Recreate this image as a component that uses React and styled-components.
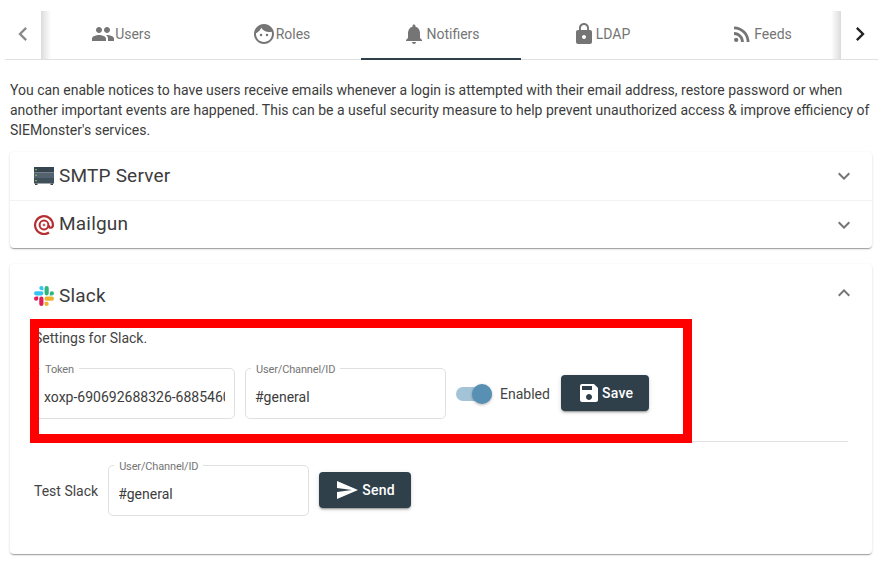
import React from "react";
import styled, { createGlobalStyle } from "styled-components";
import {
  MdPeople,
  MdFace,
  MdNotifications,
  MdLock,
  MdRssFeed,
  MdSave,
  MdSend,
  MdExpandMore,
  MdChevronLeft,
  MdChevronRight
} from "react-icons/md";

const tabs = [
  { label: "Users", icon: MdPeople },
  { label: "Roles", icon: MdFace },
  { label: "Notifiers", icon: MdNotifications, active: true },
  { label: "LDAP", icon: MdLock },
  { label: "Feeds", icon: MdRssFeed }
];

const ServerIcon = () => (
  <svg width="20" height="20" viewBox="0 0 20 20">
    <rect x="0" y="1" width="20" height="5.5" fill="#36454f" />
    <rect x="0" y="6.5" width="20" height="5.5" fill="#52636f" />
    <rect x="0" y="12" width="20" height="5.5" fill="#3f505b" />
    <rect x="1" y="3.2" width="2" height="1" fill="#8bc34a" />
    <rect x="1" y="8.7" width="2" height="1" fill="#8bc34a" />
    <rect x="1" y="14.2" width="2" height="1" fill="#8bc34a" />
    <rect x="1" y="17.5" width="2.5" height="1.5" fill="#36454f" />
    <rect x="16.5" y="17.5" width="2.5" height="1.5" fill="#36454f" />
  </svg>
);

const MailgunIcon = () => (
  <svg width="20" height="20" viewBox="0 0 20 20" fill="none" stroke="#b52e31">
    <path d="M15 17.5A8.9 8.9 0 1 1 18.9 10c0 1.7-.9 2.7-2.1 2.7s-2.1-1-2.1-2.3V10" strokeWidth="2.2" />
    <circle cx="10" cy="10" r="4.4" strokeWidth="2" />
    <circle cx="10" cy="10" r="0.9" strokeWidth="1" />
  </svg>
);

const SlackIcon = () => (
  <svg width="20" height="20" viewBox="0 0 24 24">
    <path
      fill="#E01E5A"
      d="M5.042 15.165a2.528 2.528 0 0 1-2.52 2.523A2.528 2.528 0 0 1 0 15.165a2.527 2.527 0 0 1 2.522-2.52h2.52v2.52zM6.313 15.165a2.527 2.527 0 0 1 2.521-2.52 2.527 2.527 0 0 1 2.521 2.52v6.313A2.528 2.528 0 0 1 8.834 24a2.528 2.528 0 0 1-2.521-2.522v-6.313z"
    />
    <path
      fill="#36C5F0"
      d="M8.834 5.042a2.528 2.528 0 0 1-2.521-2.52A2.528 2.528 0 0 1 8.834 0a2.528 2.528 0 0 1 2.521 2.522v2.52H8.834zM8.834 6.313a2.528 2.528 0 0 1 2.521 2.521 2.528 2.528 0 0 1-2.521 2.521H2.522A2.528 2.528 0 0 1 0 8.834a2.528 2.528 0 0 1 2.522-2.521h6.312z"
    />
    <path
      fill="#2EB67D"
      d="M18.956 8.834a2.528 2.528 0 0 1 2.522-2.521A2.528 2.528 0 0 1 24 8.834a2.528 2.528 0 0 1-2.522 2.521h-2.522V8.834zM17.688 8.834a2.528 2.528 0 0 1-2.523 2.521 2.527 2.527 0 0 1-2.52-2.521V2.522A2.527 2.527 0 0 1 15.165 0a2.528 2.528 0 0 1 2.523 2.522v6.312z"
    />
    <path
      fill="#ECB22E"
      d="M15.165 18.956a2.528 2.528 0 0 1 2.523 2.522A2.528 2.528 0 0 1 15.165 24a2.527 2.527 0 0 1-2.52-2.522v-2.522h2.52zM15.165 17.688a2.527 2.527 0 0 1-2.52-2.523 2.526 2.526 0 0 1 2.52-2.52h6.313A2.527 2.527 0 0 1 24 15.165a2.528 2.528 0 0 1-2.522 2.523h-6.313z"
    />
  </svg>
);

const Field = ({ label, value }) => (
  <FieldBox>
    <FieldLabel>{label}</FieldLabel>
    <FieldInput type="text" defaultValue={value} />
  </FieldBox>
);

export default function App() {
  return (
    <Page>
      <GlobalStyle />
      <TabBar>
        <ScrollButton>
          <MdChevronLeft size={28} color="#8a8a8a" />
        </ScrollButton>
        <TabStrip>
          {tabs.map(({ label, icon: Icon, active }) => (
            <Tab key={label} $active={active}>
              <Icon size={24} color="#757575" />
              {label}
            </Tab>
          ))}
        </TabStrip>
        <ScrollButton>
          <MdChevronRight size={28} color="#222" />
        </ScrollButton>
      </TabBar>

      <Intro>
        You can enable notices to have users receive emails whenever a login is
        attempted with their email address, restore password or when another
        important events are happened. This can be a useful security measure to
        help prevent unauthorized access &amp; improve efficiency of
        SIEMonster's services.
      </Intro>

      <Card>
        <AccordionHeader>
          <HeaderTitle>
            <ServerIcon />
            <TitleText>SMTP Server</TitleText>
          </HeaderTitle>
          <ExpandIcon>
            <MdExpandMore size={24} color="#757575" />
          </ExpandIcon>
        </AccordionHeader>
        <AccordionHeader $divided>
          <HeaderTitle>
            <MailgunIcon />
            <TitleText>Mailgun</TitleText>
          </HeaderTitle>
          <ExpandIcon>
            <MdExpandMore size={24} color="#757575" />
          </ExpandIcon>
        </AccordionHeader>
      </Card>

      <SlackCard>
        <AccordionHeader $expanded>
          <HeaderTitle>
            <SlackIcon />
            <TitleText>Slack</TitleText>
          </HeaderTitle>
          <ExpandIcon $open>
            <MdExpandMore size={24} color="#757575" />
          </ExpandIcon>
        </AccordionHeader>
        <Details>
          <Note>Settings for Slack.</Note>
          <FormRow>
            <Field label="Token" value="xoxp-690692688326-688546053" />
            <Field label="User/Channel/ID" value="#general" />
            <SwitchLabel>
              <SwitchTrack>
                <SwitchThumb />
              </SwitchTrack>
              Enabled
            </SwitchLabel>
            <ActionButton $gap={1}>
              <MdSave size={24} />
              Save
            </ActionButton>
          </FormRow>
          <Divider />
          <TestRow>
            <TestLabel>Test Slack</TestLabel>
            <Field label="User/Channel/ID" value="#general" />
            <ActionButton $gap={3}>
              <MdSend size={24} />
              Send
            </ActionButton>
          </TestRow>
        </Details>
        <Highlight />
      </SlackCard>
    </Page>
  );
}

const GlobalStyle = createGlobalStyle`
  html, body {
    margin: 0;
    background: #fff;
    font-family: Roboto, "Liberation Sans", sans-serif;
  }
`;

const Page = styled.div`
  width: 883px;
  height: 561px;
  overflow: hidden;
  padding: 11px 11px 0 10px;
  box-sizing: border-box;
  color: #333;
`;

const TabBar = styled.div`
  display: flex;
  height: 49px;
  margin: 0 -6px 0 -5px;
  border-bottom: 1px solid #e0e0e0;
  box-sizing: border-box;
`;

const ScrollButton = styled.div`
  width: 36px;
  flex: none;
  display: flex;
  align-items: center;
  justify-content: center;
  padding-bottom: 3px;
  box-sizing: border-box;
  &:last-child {
    width: 37px;
  }
`;

const TabStrip = styled.div`
  display: flex;
  width: 800px;
  background:
    linear-gradient(to right, rgba(0, 0, 0, 0.14), rgba(0, 0, 0, 0) 10px),
    linear-gradient(to left, rgba(0, 0, 0, 0.14), rgba(0, 0, 0, 0) 10px);
`;

const Tab = styled.div`
  width: 160px;
  height: 49px;
  display: flex;
  align-items: center;
  justify-content: center;
  box-sizing: border-box;
  padding-bottom: 2px;
  font-size: 14px;
  color: #757575;
  border-bottom: 2px solid ${props => (props.$active ? "#2f404b" : "transparent")};
`;

const Intro = styled.p`
  margin: 20px -6px 12px 0;
  font-size: 14px;
  line-height: 20px;
  color: #3c3c3c;
`;

const Card = styled.section`
  background: #fff;
  border-radius: 4px;
  box-shadow: 0 2px 1px -1px rgba(0, 0, 0, 0.2), 0 1px 1px 0 rgba(0, 0, 0, 0.14),
    0 1px 3px 0 rgba(0, 0, 0, 0.12);
`;

const SlackCard = styled(Card)`
  position: relative;
  margin-top: 16px;
`;

const AccordionHeader = styled.div`
  height: ${props => (props.$expanded ? "64px" : "48px")};
  display: flex;
  align-items: center;
  justify-content: space-between;
  padding: 0 16px 0 24px;
  box-sizing: border-box;
  border-top: ${props => (props.$divided ? "1px solid #f2f2f2" : "none")};
`;

const HeaderTitle = styled.div`
  display: flex;
  align-items: center;
  gap: 5px;
  font-size: 19px;
  letter-spacing: 0.2px;
  color: #3c3c3c;
`;

const TitleText = styled.span`
  margin-bottom: 2px;
`;

const ExpandIcon = styled.span`
  display: flex;
  transform: ${props => (props.$open ? "rotate(180deg)" : "none")} translateY(3px);
`;

const Details = styled.div`
  padding: 0 24px 38px;
`;

const Note = styled.div`
  font-size: 14px;
  line-height: 20px;
  margin-bottom: 20px;
  color: #444;
`;

const FormRow = styled.div`
  display: flex;
  align-items: center;
  gap: 10px;
`;

const TestRow = styled(FormRow)`
  margin-top: 23px;
`;

const FieldBox = styled.div`
  position: relative;
  width: 201px;
  height: 51px;
  flex: none;
  border: 1px solid #e0e0e0;
  border-radius: 5px;
  box-sizing: border-box;
`;

const FieldLabel = styled.label`
  position: absolute;
  top: -6px;
  left: 5px;
  padding: 0 5px;
  background: #fff;
  font-size: 11px;
  line-height: 13px;
  letter-spacing: -0.15px;
  color: #757575;
`;

const FieldInput = styled.input`
  width: 100%;
  height: 100%;
  padding: 7px 9px 0;
  border: 0;
  outline: 0;
  background: transparent;
  box-sizing: border-box;
  font-family: inherit;
  font-size: 14px;
  color: #3c3c3c;
`;

const SwitchLabel = styled.div`
  display: flex;
  align-items: center;
  gap: 8px;
  margin-right: 1px;
  font-size: 14px;
  color: #444;
`;

const SwitchTrack = styled.div`
  position: relative;
  width: 36px;
  height: 14px;
  border-radius: 7px;
  background: #a3c3d7;
`;

const SwitchThumb = styled.div`
  position: absolute;
  top: -3px;
  right: 0;
  width: 20px;
  height: 20px;
  border-radius: 50%;
  background: #5790b3;
  box-shadow: 0 1px 3px rgba(0, 0, 0, 0.3);
`;

const ActionButton = styled.button`
  height: 36px;
  margin-top: -2px;
  display: flex;
  align-items: center;
  gap: ${props => props.$gap || 0}px;
  padding: 0 16px;
  border: 0;
  border-radius: 4px;
  background: #2f404b;
  color: #fff;
  font-family: inherit;
  font-size: 14px;
  font-weight: 500;
  letter-spacing: 0.3px;
  box-shadow: 0 3px 1px -2px rgba(0, 0, 0, 0.2), 0 2px 2px 0 rgba(0, 0, 0, 0.14),
    0 1px 5px 0 rgba(0, 0, 0, 0.12);
`;

const Divider = styled.div`
  height: 1px;
  margin-top: 22px;
  background: #e0e0e0;
`;

const TestLabel = styled.div`
  font-size: 14px;
  color: #444;
`;

const Highlight = styled.div`
  position: absolute;
  left: 20px;
  top: 55px;
  width: 662px;
  height: 124px;
  border: 9px solid #ff0000;
  box-sizing: border-box;
  pointer-events: none;
`;
